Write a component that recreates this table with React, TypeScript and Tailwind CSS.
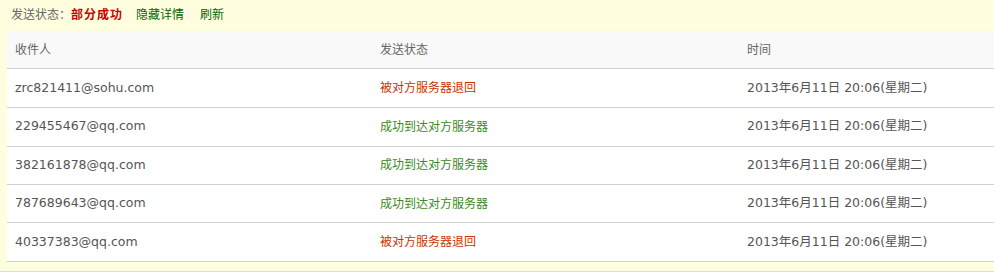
const rows = [
  { to: 'zrc821411@sohu.com', ok: false, h: 'h-[38px]' },
  { to: '229455467@qq.com', ok: true, h: 'h-[37.5px]' },
  { to: '382161878@qq.com', ok: true, h: 'h-[37.5px]' },
  { to: '787689643@qq.com', ok: true, h: 'h-[37px]' },
  { to: '40337383@qq.com', ok: false, h: 'h-[38px]' },
];

const cjk = "font-['DejaVu_Sans','Noto_Sans_CJK_SC',sans-serif]";

export default function App() {
  return (
    <div className={`w-[994px] bg-[#ffffe0] pl-[7px] pb-[9px] border-b border-[#dcdcdc] ${cjk}`}>
      <div className="flex h-[31px] items-start pt-[7px] pl-[4px] text-[12px] leading-[16px]">
        <span className="text-[#666]">发送状态：</span>
        <span className="font-bold tracking-[1px] text-[#c00]">部分成功</span>
        <a className="ml-[13px] text-[#060]">隐藏详情</a>
        <a className="ml-[16px] text-[#060]">刷新</a>
      </div>
      <div className="bg-white">
        <div className="grid h-[38px] grid-cols-[365px_367px_1fr] items-center border-b border-[#cfcfcf] bg-[#f9f9f9] text-[12px] text-[#666]">
          <div className="px-2">收件人</div>
          <div className="px-2">发送状态</div>
          <div className="px-2">时间</div>
        </div>
        {rows.map((r) => (
          <div
            key={r.to}
            className={`grid ${r.h} box-content grid-cols-[365px_367px_1fr] items-center border-b border-[#d2d2d2]`}
          >
            <div className="px-2 text-[12.5px] text-[#555]">{r.to}</div>
            <div className={`px-2 text-[12px] ${r.ok ? 'text-[#3a8a22]' : 'text-[#cc3300]'}`}>
              {r.ok ? '成功到达对方服务器' : '被对方服务器退回'}
            </div>
            <div className="px-2 text-[12.5px] text-[#555]">2013年6月11日 20:06(星期二)</div>
          </div>
        ))}
      </div>
    </div>
  );
}
